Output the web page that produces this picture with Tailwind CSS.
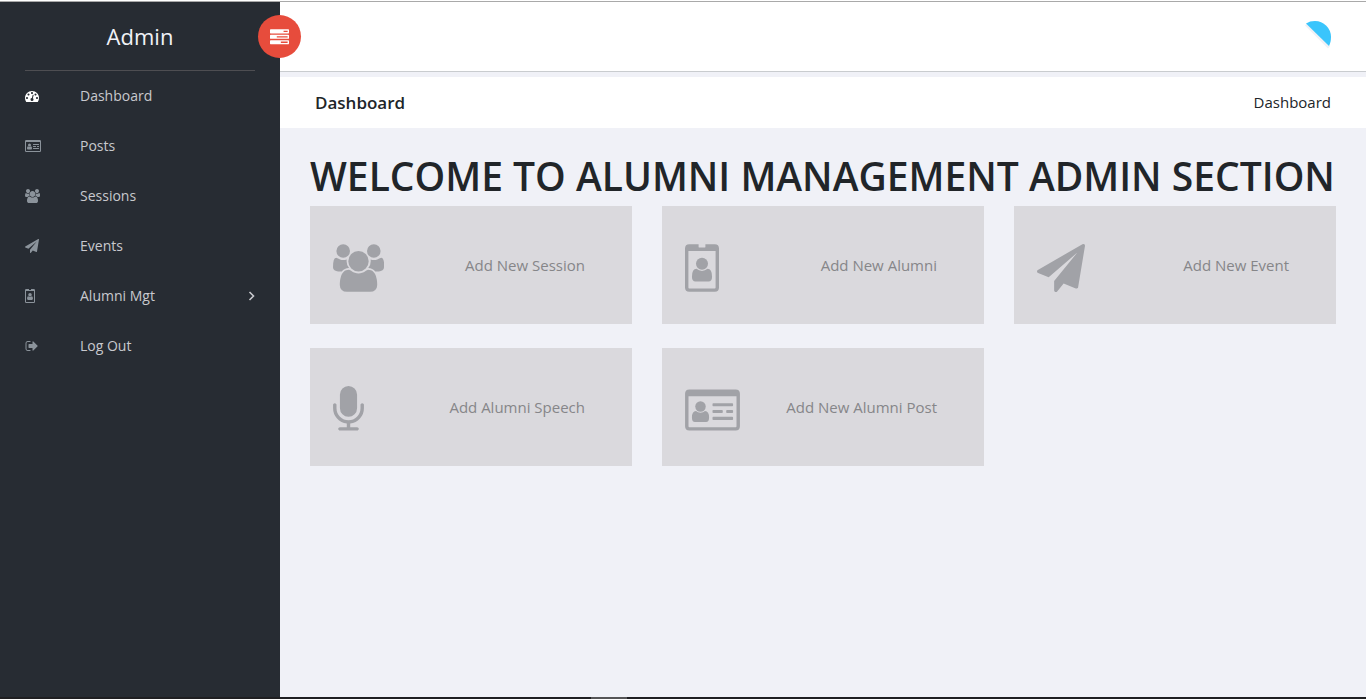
<!DOCTYPE html>
<html lang="en">
<head>
<meta charset="utf-8">
<meta name="viewport" content="width=device-width, initial-scale=1">
<title>Admin</title>
<script src="https://cdn.jsdelivr.net/npm/@tailwindcss/browser@4"></script>
</head>
<body class="font-['Open_Sans',sans-serif] bg-[#f0f1f7] text-[#212529]">
<svg class="hidden" aria-hidden="true">
  <symbol id="users" viewBox="0 0 1920 1792"><path d="M593 896q-162 5-265 128h-134q-82 0-138-40.500t-56-118.500q0-353 124-353 6 0 43.500 21t97.500 42.500 119 21.500q67 0 133-23-5 37-5 66 0 159 93 256zm1071 637q0 120-73 189.500t-194 69.500h-874q-121 0-194-69.500t-73-189.500q0-53 3.500-103.500t14-109 26.500-108.500 43-97.500 62-81 85.500-53.500 111.500-20q10 0 43 21.500t73 48 107 48 135 21.500 135-21.500 107-48 73-48 43-21.500q61 0 111.500 20t85.500 53.500 62 81 43 97.500 26.500 108.500 14 109 3.500 103.500zm-1024-1277q0 106-75 181t-181 75-181-75-75-181 75-181 181-75 181 75 75 181zm704 384q0 159-112.500 271.500t-271.500 112.500-271.500-112.500-112.500-271.500 112.500-271.500 271.500-112.500 271.500 112.500 112.500 271.500zm576 225q0 78-56 118.500t-138 40.500h-134q-103-123-265-128 93-97 93-256 0-29-5-66 66 23 133 23 59 0 119-21.500t97.500-42.500 43.500-21q124 0 124 353zm-128-609q0 106-75 181t-181 75-181-75-75-181 75-181 181-75 181 75 75 181z"/></symbol>
  <symbol id="plane" viewBox="0 0 1792 1792"><path d="M1764 11q33 24 27 64l-256 1536q-5 29-32 45-14 8-31 8-11 0-24-5l-453-185-242 295q-18 23-49 23-13 0-22-4-19-7-30.500-23.500t-11.500-36.500v-349l864-1059-1069 925-395-162q-37-14-40-55-2-40 32-59l1664-960q15-9 32-9 20 0 36 11z"/></symbol>
  <symbol id="mic" viewBox="320 0 1152 1792"><path d="M1472 704v128q0 221-147.500 384.500t-364.500 187.500v132h256q26 0 45 19t19 45-19 45-45 19h-640q-26 0-45-19t-19-45 19-45 45-19h256v-132q-217-24-364.500-187.500t-147.500-384.500v-128q0-26 19-45t45-19 45 19 19 45v128q0 185 131.500 316.500t316.500 131.500 316.500-131.500 131.500-316.500v-128q0-26 19-45t45-19 45 19 19 45zm-256-384v512q0 132-94 226t-226 94-226-94-94-226v-512q0-132 94-226t226-94 226 94 94 226z"/></symbol>
  <symbol id="badge" viewBox="0 0 1280 1792"><path fill-rule="evenodd" d="M160 0H512V96q0 32 32 32H736q32 0 32-32V0H1120q160 0 160 160V1632q0 160-160 160H160Q0 1792 0 1632V160Q0 0 160 0ZM128 256V1632q0 32 32 32H1120q32 0 32-32V256Z"/><circle cx="640" cy="740" r="226"/><path d="M434 926q90 80 206 80t206-80q172 0 172 300 0 182-134 182H396q-134 0-134-182 0-300 172-300z"/></symbol>
  <symbol id="card" viewBox="0 0 2048 1792"><path fill-rule="evenodd" d="M160 128H1888q160 0 160 160V1504q0 160-160 160H160Q0 1664 0 1504V288Q0 128 160 128ZM128 384V1504q0 32 32 32H1888q32 0 32-32V384Z"/><circle cx="576" cy="768" r="196"/><path d="M408 930q70 66 168 66t168 -66q152 0 152 246 0 168-114 168H370q-114 0-114-168 0-246 152-246z"/><rect x="1024" y="640" width="768" height="116" rx="30"/><rect x="1024" y="896" width="384" height="116" rx="30"/><rect x="1536" y="896" width="256" height="116" rx="30"/><rect x="1024" y="1152" width="768" height="116" rx="30"/></symbol>
  <symbol id="tasks" viewBox="0 0 1792 1792"><path d="M1024 1408h640v-128h-640v128zm-384-512h1024v-128h-1024v128zm640-512h384v-128h-384v128zm512 832v256q0 26-19 45t-45 19h-1664q-26 0-45-19t-19-45v-256q0-26 19-45t45-19h1664q26 0 45 19t19 45zm0-512v256q0 26-19 45t-45 19h-1664q-26 0-45-19t-19-45v-256q0-26 19-45t45-19h1664q26 0 45 19t19 45zm0-512v256q0 26-19 45t-45 19h-1664q-26 0-45-19t-19-45v-256q0-26 19-45t45-19h1664q26 0 45 19t19 45z"/></symbol>
  <symbol id="gauge" viewBox="0 0 1792 1792"><path d="M384 1152q0-53-37.500-90.500t-90.500-37.500-90.500 37.500-37.500 90.500 37.500 90.500 90.500 37.500 90.500-37.500 37.500-90.500zm192-448q0-53-37.500-90.500t-90.500-37.500-90.500 37.500-37.500 90.500 37.500 90.500 90.500 37.500 90.500-37.500 37.500-90.500zm428 481l101-382q6-26-7.500-48.500t-38.500-29.500-48 6.500-30 39.500l-101 382q-60 5-107 43.500t-63 98.500q-20 77 20 146t117 89 146-20 89-117q16-60-6-117t-72-91zm660-33q0-53-37.500-90.500t-90.500-37.500-90.500 37.500-37.500 90.500 37.500 90.500 90.500 37.500 90.500-37.500 37.500-90.500zm-640-640q0-53-37.500-90.500t-90.500-37.500-90.500 37.500-37.500 90.500 37.500 90.500 90.500 37.500 90.500-37.500 37.500-90.500zm448 192q0-53-37.500-90.500t-90.500-37.500-90.500 37.500-37.500 90.500 37.500 90.500 90.500 37.500 90.500-37.500 37.500-90.500zm320 448q0 261-141 483-19 29-54 29h-1402q-35 0-54-29-141-221-141-483 0-182 71-348t191-286 286-191 348-71 348 71 286 191 191 286 71 348z"/></symbol>
  <symbol id="exit" viewBox="0 0 1664 1792"><path d="M704 1440q0 4 1 20t.5 26.500-3 23.500-10 19.500-20.500 6.500h-320q-119 0-203.500-84.500t-84.500-203.500v-704q0-119 84.500-203.500t203.500-84.500h320q13 0 22.500 9.500t9.500 22.500q0 4 1 20t.5 26.500-3 23.500-10 19.500-20.500 6.500h-320q-66 0-113 47t-47 113v704q0 66 47 113t113 47h312l11.500 1 11.500 3 8 5.500 7 9 2 13.500zm928-544q0 26-19 45l-544 544q-19 19-45 19t-45-19-19-45v-288h-448q-26 0-45-19t-19-45v-384q0-26 19-45t45-19h448v-288q0-26 19-45t45-19 45 19l544 544q19 19 19 45z"/></symbol>
</svg>

<div class="flex min-h-screen flex-col">
  <div class="mt-px h-px shrink-0 bg-[#a9a9a9] shadow-[0_-1px_0_white]"></div>
  <div class="flex grow">
    <aside class="relative w-[280px] shrink-0 bg-[#272c33] px-[25px]">
      <div class="flex h-[69px] items-center justify-center border-b border-[#4e4e52]">
        <a href="#" class="text-[22px] leading-8 text-[#f1f2f7]">Admin</a>
      </div>
      <button type="button" aria-label="Toggle menu" class="absolute top-[13px] -right-[21px] flex size-[43px] items-center justify-center rounded-full bg-[#e74c3c] pt-[2px] text-white">
        <svg class="size-[19px]" fill="currentColor"><use href="#tasks"/></svg>
      </button>
      <nav>
        <ul class="text-sm text-[#c8c9ce]">
          <li><a href="#" class="flex h-[50px] items-center"><span class="w-[55px] text-white"><svg class="h-[14px] w-[14px]" fill="currentColor"><use href="#gauge"/></svg></span>Dashboard</a></li>
          <li><a href="#" class="flex h-[50px] items-center"><span class="w-[55px] text-[#8b939b]"><svg class="h-[14px] w-[16px]" fill="currentColor"><use href="#card"/></svg></span>Posts</a></li>
          <li><a href="#" class="flex h-[50px] items-center"><span class="w-[55px] text-[#8b939b]"><svg class="h-[14px] w-[15px]" fill="currentColor"><use href="#users"/></svg></span>Sessions</a></li>
          <li><a href="#" class="flex h-[50px] items-center"><span class="w-[55px] text-[#8b939b]"><svg class="h-[14px] w-[14px]" fill="currentColor"><use href="#plane"/></svg></span>Events</a></li>
          <li><a href="#" class="flex h-[50px] items-center"><span class="w-[55px] text-[#8b939b]"><svg class="h-[14px] w-[10px]" fill="currentColor"><use href="#badge"/></svg></span>Alumni Mgt<svg class="ml-auto h-[10px] w-[7px]" viewBox="0 0 7 10" fill="none" stroke="currentColor" stroke-width="1.600"><path d="M1.500 1 5.500 5 1.500 9"/></svg></a></li>
          <li><a href="#" class="flex h-[50px] items-center"><span class="w-[55px] text-[#8b939b]"><svg class="h-[14px] w-[13px]" fill="currentColor"><use href="#exit"/></svg></span>Log Out</a></li>
        </ul>
      </nav>
    </aside>

    <div class="min-w-0 grow">
      <header class="flex h-[70px] items-start justify-end border-b border-[#c9cccf] bg-white pt-[18px] pr-[35px]">
        <a href="#" aria-label="User menu"><svg class="h-8 w-8" viewBox="0 0 32 32"><path d="M7 4.500 30 27.500" stroke="#f0f1f6" stroke-width="3"/><path d="M7 3.500C10 1.800 12 1 16 1A16 16 0 0 1 32 17C32 20 31.500 23 30 26Z" fill="#3ac5fc"/></svg></a>
      </header>
      <div class="mt-[5px] flex h-[51px] items-center justify-between bg-white px-[35px]">
        <h1 class="text-[17px] font-semibold">Dashboard</h1>
        <span class="text-[15px]">Dashboard</span>
      </div>
      <main class="px-[30px] pt-6">
        <h2 class="text-[39px] leading-[48px] font-semibold whitespace-nowrap">WELCOME TO ALUMNI MANAGEMENT ADMIN SECTION</h2>
        <div class="mt-[6px] grid grid-cols-3 gap-x-[30px] gap-y-6 text-[15px] text-[#868689]">
          <a href="#" class="flex h-[118px] items-center justify-between bg-[#dad9dd] pt-[6px] pr-[47px] pl-[23px]"><svg class="h-12 w-[51px]" fill="#a1a2a7"><use href="#users"/></svg><span class="pb-[6px]">Add New Session</span></a>
          <a href="#" class="flex h-[118px] items-center justify-between bg-[#dad9dd] pt-[6px] pr-[47px] pl-[23px]"><svg class="h-12 w-[34px]" fill="#a1a2a7"><use href="#badge"/></svg><span class="pb-[6px]">Add New Alumni</span></a>
          <a href="#" class="flex h-[118px] items-center justify-between bg-[#dad9dd] pt-[6px] pr-[47px] pl-[23px]"><svg class="h-12 w-12" fill="#a1a2a7"><use href="#plane"/></svg><span class="pb-[6px]">Add New Event</span></a>
          <a href="#" class="flex h-[118px] items-center justify-between bg-[#dad9dd] pt-[6px] pr-[47px] pl-[23px]"><svg class="h-12 w-[31px]" fill="#a1a2a7"><use href="#mic"/></svg><span class="pb-[6px]">Add Alumni Speech</span></a>
          <a href="#" class="flex h-[118px] items-center justify-between bg-[#dad9dd] pt-[6px] pr-[47px] pl-[23px]"><svg class="h-12 w-[55px]" fill="#a1a2a7"><use href="#card"/></svg><span class="pb-[6px]">Add New Alumni Post</span></a>
        </div>
      </main>
    </div>
  </div>
  <footer class="flex h-[2px] shrink-0 bg-[#1f1f22] pl-[591px]"><div class="w-9 bg-[#555557]"></div></footer>
</div>
</body>
</html>
